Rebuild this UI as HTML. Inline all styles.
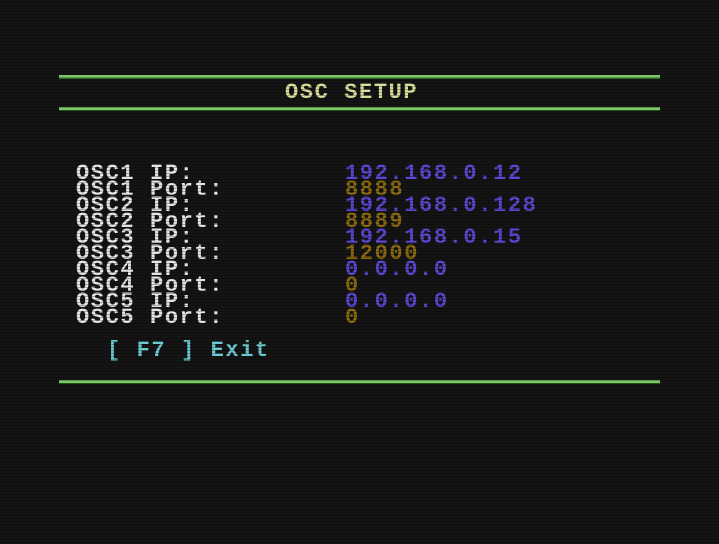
<!DOCTYPE html>
<html><head><style>
html,body{margin:0;padding:0}
body{width:719px;height:544px;background:#141414;position:relative;overflow:hidden;
font-family:"Liberation Mono",monospace;font-weight:bold;font-size:22px;letter-spacing:1.6px}
body:after{content:"";position:absolute;inset:0;background:repeating-linear-gradient(#0000 0 2px,#0004 2px 3px);pointer-events:none}
.l{position:absolute;left:59px;width:601px;height:3px;background:#7fc86a;box-shadow:0 1px 0 #2a6a20}
.t{position:absolute;white-space:pre;line-height:16px}
.w{color:#e4e4e4}.p{color:#5b48d2}.o{color:#8c6a12}
</style></head><body>
<div class="l" style="top:75px"></div>
<div class="l" style="top:107px"></div>
<div class="l" style="top:380px"></div>
<div class="t" style="left:285px;top:85px;color:#d8dc9a">OSC SETUP</div>
<div class="t w" style="left:76px;top:166px">OSC1 IP:
OSC1 Port:
OSC2 IP:
OSC2 Port:
OSC3 IP:
OSC3 Port:
OSC4 IP:
OSC4 Port:
OSC5 IP:
OSC5 Port:</div>
<div class="t" style="left:345px;top:166px"><span class="p">192.168.0.12</span>
<span class="o">8888</span>
<span class="p">192.168.0.128</span>
<span class="o">8889</span>
<span class="p">192.168.0.15</span>
<span class="o">12000</span>
<span class="p">0.0.0.0</span>
<span class="o">0</span>
<span class="p">0.0.0.0</span>
<span class="o">0</span></div>
<div class="t" style="left:107px;top:343px;color:#6ccad2">[ F7 ] Exit</div>
</body></html>
